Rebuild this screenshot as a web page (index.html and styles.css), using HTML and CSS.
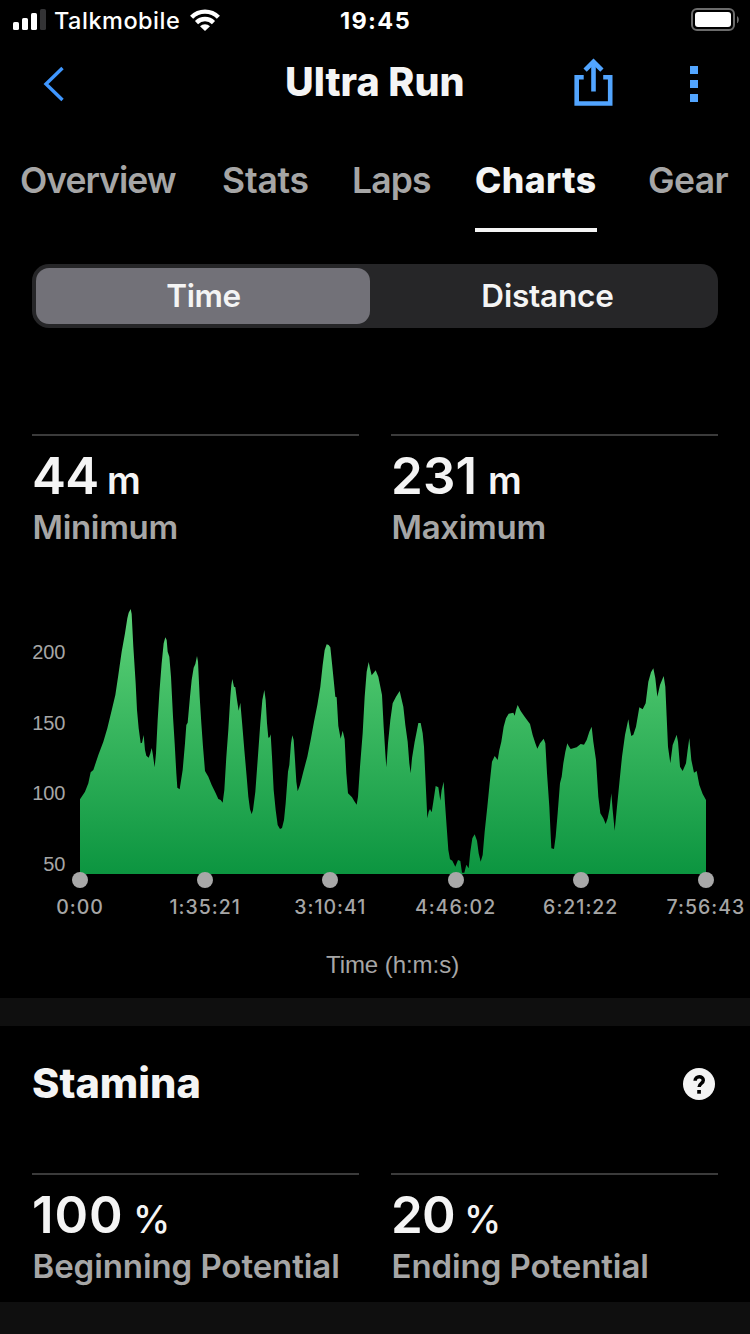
FILE: index.html
```html
<!DOCTYPE html>
<html lang="en">
<head>
<meta charset="utf-8">
<title>Ultra Run</title>
<link rel="stylesheet" href="styles.css">
</head>
<body>
<div class="status">
  <div class="carrier">
    <svg class="signal" width="34" height="22" viewBox="0 0 34 22"><g fill="#fff"><rect x="0" y="14" width="6" height="8" rx="1.6"/><rect x="9" y="10" width="6" height="12" rx="1.6"/><rect x="18" y="5" width="6" height="17" rx="1.6"/></g><rect x="27" y="1" width="6" height="21" rx="1.6" fill="#333335"/></svg>
    <span class="carrier-name">Talkmobile</span>
    <svg class="wifi" width="30" height="22" viewBox="0 0 30 22"><g fill="none" stroke="#fff" stroke-width="4.4"><path d="M1.6 8.2a19 19 0 0 1 26.8 0"/><path d="M6.500 13.600a12 12 0 0 1 17 0"/></g><path fill="#fff" d="M10 17.300a7.200 7.200 0 0 1 10 0L15 22z"/></svg>
  </div>
  <span class="clock">19:45</span>
  <svg class="battery" width="49" height="24" viewBox="0 0 49 24"><rect x="1" y="1" width="42" height="21" rx="5" fill="none" stroke="#6b6b6b" stroke-width="2"/><rect x="4" y="4" width="36" height="15" rx="3" fill="#fff"/><path fill="#6b6b6b" d="M46 8c2.4 1.300 2.400 6 0 7.300z"/></svg>
</div>

<header class="nav">
  <svg class="back" width="22" height="36" viewBox="0 0 22 36"><path d="M19.500 2L3 18l16.500 16" fill="none" stroke="#3f97ff" stroke-width="3.400"/></svg>
  <h1 class="title">Ultra Run</h1>
  <svg class="share" width="40" height="48" viewBox="0 0 40 48"><g fill="none" stroke="#52a5ff" stroke-width="4.600"><path d="M10.700 19.300H3.700v26.200h33.500V19.300h-7"/><path d="M20.500 33.500V4"/><path d="M12.100 12.200L20.500 3.800l8.400 8.400"/></g></svg>
  <svg class="more" width="8" height="36" viewBox="0 0 8 36"><path fill="#52a5ff" d="M0 0h8v8H0zM0 14h8v8H0zM0 28h8v8H0z"/></svg>
</header>

<nav class="tabs">
  <span class="tab overview">Overview</span>
  <span class="tab stats">Stats</span>
  <span class="tab laps">Laps</span>
  <span class="tab charts">Charts</span>
  <span class="tab gear">Gear</span>
</nav>

<div class="segments">
  <span class="segment selected">Time</span>
  <span class="segment distance">Distance</span>
</div>

<section class="metrics">
  <div class="metric"><div class="value"><span class="minimum">44</span><span class="unit">m</span></div><div class="label">Minimum</div></div>
  <div class="metric"><div class="value"><span class="maximum">231</span><span class="unit">m</span></div><div class="label">Maximum</div></div>
</section>

<section class="chart">
  <div class="y-axis"><span>200</span><span>150</span><span>100</span><span>50</span></div>
  <svg class="plot" width="626" height="288" viewBox="240 0 1878 864">
    <defs><linearGradient id="elevation" gradientUnits="userSpaceOnUse" x1="0" y1="27" x2="0" y2="822"><stop offset="0" stop-color="#5dd278"/><stop offset="1" stop-color="#0c9540"/></linearGradient></defs>
    <path fill="url(#elevation)" d="M240 822V598L255 575 265 550 272 517 280 510 295 465 310 425 322 385 334 335 346 285 355 225 365 155 375 100 382 55 386 38 392 27 395 42 400 140 407 250 411 330 416 385 422 430 426 428 431 405 435 450 439 467 446 473 451 460 455 444 458 460 464 502 468 460 473 360 478 280 485 190 491 130 496 112 500 120 503 155 508 170 513 230 519 350 524 430 529 520 532 563 539 568 548 510 555 430 559 375 563 368 570 290 575 240 581 203 586 192 591 168 594 185 599 290 604 370 609 440 615 513 625 530 635 555 645 575 655 597 662 600 668 608 673 570 679 470 685 390 691 290 694 255 697 237 702 260 706 262 711 300 716 332 721 308 726 365 733 450 740 530 745 590 750 628 755 642 759 630 766 575 773 480 781 370 787 300 793 270 797 300 801 370 805 413 809 412 812 403 816 470 821 570 827 630 833 675 840 687 846 684 852 660 857 610 864 515 868 495 873 430 877 406 881 420 885 480 889 545 893 574 900 555 910 515 922 470 932 420 942 365 952 315 961 260 968 195 974 150 980 133 986 135 991 142 996 190 1002 250 1006 290 1010 292 1015 378 1022 416 1028 392 1034 418 1039 520 1044 580 1056 592 1063 604 1070 614 1074 590 1080 500 1088 400 1094 290 1100 215 1106 186 1110 205 1115 226 1120 220 1127 211 1135 230 1140 255 1146 285 1151 380 1156 460 1159 502 1164 430 1171 360 1178 310 1188 290 1199 273 1204 295 1210 320 1216 375 1223 425 1228 490 1232 520 1236 475 1244 425 1250 395 1255 369 1262 369 1268 400 1272 440 1277 550 1282 655 1286 635 1290 627 1295 637 1300 605 1307 558 1315 562 1321 602 1325 570 1331 545 1335 610 1340 680 1345 750 1350 778 1357 782 1366 800 1374 780 1381 783 1386 818 1393 818 1399 794 1406 805 1411 755 1417 715 1424 703 1431 722 1436 760 1442 785 1448 765 1454 695 1462 620 1469 550 1476 485 1484 468 1493 480 1498 450 1504 425 1511 380 1518 355 1526 341 1540 338 1544 347 1548 330 1553 315 1562 333 1575 352 1590 372 1598 405 1606 430 1612 446 1620 430 1631 416 1636 430 1641 520 1648 620 1654 745 1662 747 1667 710 1673 640 1680 550 1685 530 1690 490 1696 455 1702 430 1706 438 1712 447 1730 442 1742 432 1752 434 1760 420 1768 395 1775 380 1780 425 1788 480 1795 590 1801 640 1810 655 1817 672 1823 655 1829 625 1834 580 1838 630 1844 692 1850 630 1858 550 1866 470 1875 405 1885 358 1889 385 1894 408 1900 404 1908 380 1918 322 1928 328 1937 310 1945 245 1953 217 1960 205 1966 235 1972 290 1980 255 1991 228 1996 260 2000 350 2004 440 2011 490 2018 435 2030 404 2034 425 2040 500 2048 513 2058 490 2063 450 2068 414 2074 480 2082 518 2090 513 2098 555 2108 582 2118 600V822z"/>
    <g fill="#a8a8a8"><circle cx="240" cy="840" r="24"/><circle cx="615" cy="840" r="24"/><circle cx="990" cy="840" r="24"/><circle cx="1368" cy="840" r="24"/><circle cx="1743" cy="840" r="24"/><circle cx="2118" cy="840" r="24"/></g>
  </svg>
</section>
<div class="x-axis"><span>0:00</span><span>1:35:21</span><span>3:10:41</span><span>4:46:02</span><span>6:21:22</span><span>7:56:43</span></div>
<div class="axis-title">Time (h:m:s)</div>

<div class="divider"></div>

<section class="stamina">
  <h2 class="heading">Stamina</h2>
  <svg class="help" width="32" height="32" viewBox="0 0 32 32"><circle cx="16" cy="16" r="16" fill="#f4f4f4"/><path d="M12.100 12.800c0-5.500 8.200-5.200 8.200-.6 0 3.200-4.200 3-4.200 6.800" fill="none" stroke="#000" stroke-width="3.500"/><path d="M14.200 22h3.700v3.700h-3.700z"/></svg>
</section>
<section class="metrics">
  <div class="metric"><div class="value"><span class="hundred">100</span><span class="unit percent">%</span></div><div class="label potential">Beginning Potential</div></div>
  <div class="metric"><div class="value"><span class="twenty">20</span><span class="unit percent">%</span></div><div class="label potential">Ending Potential</div></div>
</section>
<div class="divider last"></div>
</body>
</html>
```
FILE: styles.css
```css
* { box-sizing: border-box; }
body { margin: 0; width: 750px; height: 1334px; overflow: hidden; background: #000; color: #f4f4f4; font-family: Inter, "Liberation Sans", sans-serif; white-space: nowrap; display: flex; flex-direction: column; }
body > * { flex: none; }
svg { display: block; flex: none; }

.status { height: 40px; padding: 0 10px 0 13px; display: grid; grid-template-columns: 1fr auto 1fr; align-items: start; color: #fff; }
.carrier { display: flex; }
.signal { margin-top: 8px; }
.carrier-name { margin: 0 9px 0 7px; width: 127px; font-size: 23.5px; font-weight: 500; line-height: 41px; letter-spacing: 0.5px; }
.wifi { margin-top: 9px; }
.clock { padding-right: 2px; font-size: 23.5px; font-weight: 700; line-height: 41px; letter-spacing: 1.4px; }
.battery { margin-top: 8px; justify-self: end; }

.nav { height: 88px; padding: 0 52px 0 43px; display: flex; align-items: flex-start; }
.back { margin-top: 26px; }
.title { margin: 0; padding-left: 220px; width: 508px; font-size: 39.5px; font-weight: 800; line-height: 84px; letter-spacing: 0; }
.share { margin-top: 18px; }
.more { margin: 26px 0 0 77px; }

.tabs { height: 104px; padding-left: 20px; display: flex; color: #a6a6a6; font-size: 35.5px; font-weight: 600; line-height: 106px; }
.overview { width: 202px; letter-spacing: -1px; }
.stats { width: 130px; letter-spacing: -0.2px; }
.laps { width: 123px; letter-spacing: -0.9px; }
.charts { width: 122px; margin-right: 51px; color: #f4f4f4; font-weight: 800; letter-spacing: 0.4px; border-bottom: 4px solid #f4f4f4; }
.gear { letter-spacing: -0.6px; }

.segments { margin: 32px 32px 0; height: 64px; padding: 4px; border-radius: 17px; background: #262628; display: grid; grid-template-columns: 334px 1fr; font-size: 31.5px; font-weight: 600; line-height: 56px; text-align: center; }
.segment { padding-left: 1px; letter-spacing: -0.4px; }
.segment.selected { border-radius: 13px; background: #727178; }
.segment.distance { padding-left: 11px; letter-spacing: -0.2px; }

.metrics { padding: 0 32px; display: grid; grid-template-columns: 1fr 1fr; gap: 32px; height: 129px; }
.segments + .metrics { margin-top: 106px; height: 166px; }
.metric { border-top: 2px solid #3b3b3b; }
.value { height: 80px; display: flex; align-items: baseline; font-size: 51px; font-weight: 600; line-height: 80px; }
.minimum { width: 75px; letter-spacing: -0.7px; }
.maximum { width: 97px; letter-spacing: 0.2px; }
.hundred { width: 101px; letter-spacing: 0.9px; }
.twenty { width: 73px; letter-spacing: -0.7px; }
.unit { font-size: 37.5px; line-height: 44px; font-weight: 600; letter-spacing: -0.5px; }
.unit.percent { font-weight: 500; }
.label { padding-left: 0.5px; margin-top: -7px; line-height: 36px; font-size: 33px; font-weight: 600; letter-spacing: -0.3px; color: #a6a6a6; }
.label.potential { letter-spacing: -0.08px; }

.chart { height: 288px; display: flex; }
.y-axis { width: 80px; padding: 17.200px 14.500px 0 0; display: flex; flex-direction: column; text-align: right; font: 20px/70.600px "Liberation Sans", sans-serif; color: #a6a6a6; }
.plot { overflow: visible; }
.x-axis { margin-left: 17.400px; height: 38px; display: flex; font-size: 19.500px; font-weight: 500; line-height: 39px; color: #a6a6a6; text-align: center; letter-spacing: 1px; }
.x-axis span { flex: 0 0 125.200px; }
.axis-title { height: 72px; padding-left: 35px; text-align: center; font: 24px/78px "Liberation Sans", sans-serif; letter-spacing: -0.05px; color: #a6a6a6; }

.divider { height: 28px; background: #0f0f0f; }
.divider.last { height: 32px; }
.stamina { height: 147px; padding: 0 35px 0 32px; display: flex; justify-content: space-between; }
.heading { margin: 0; font-size: 41.5px; font-weight: 800; line-height: 114px; letter-spacing: 0; }
.help { margin-top: 42px; }
```
